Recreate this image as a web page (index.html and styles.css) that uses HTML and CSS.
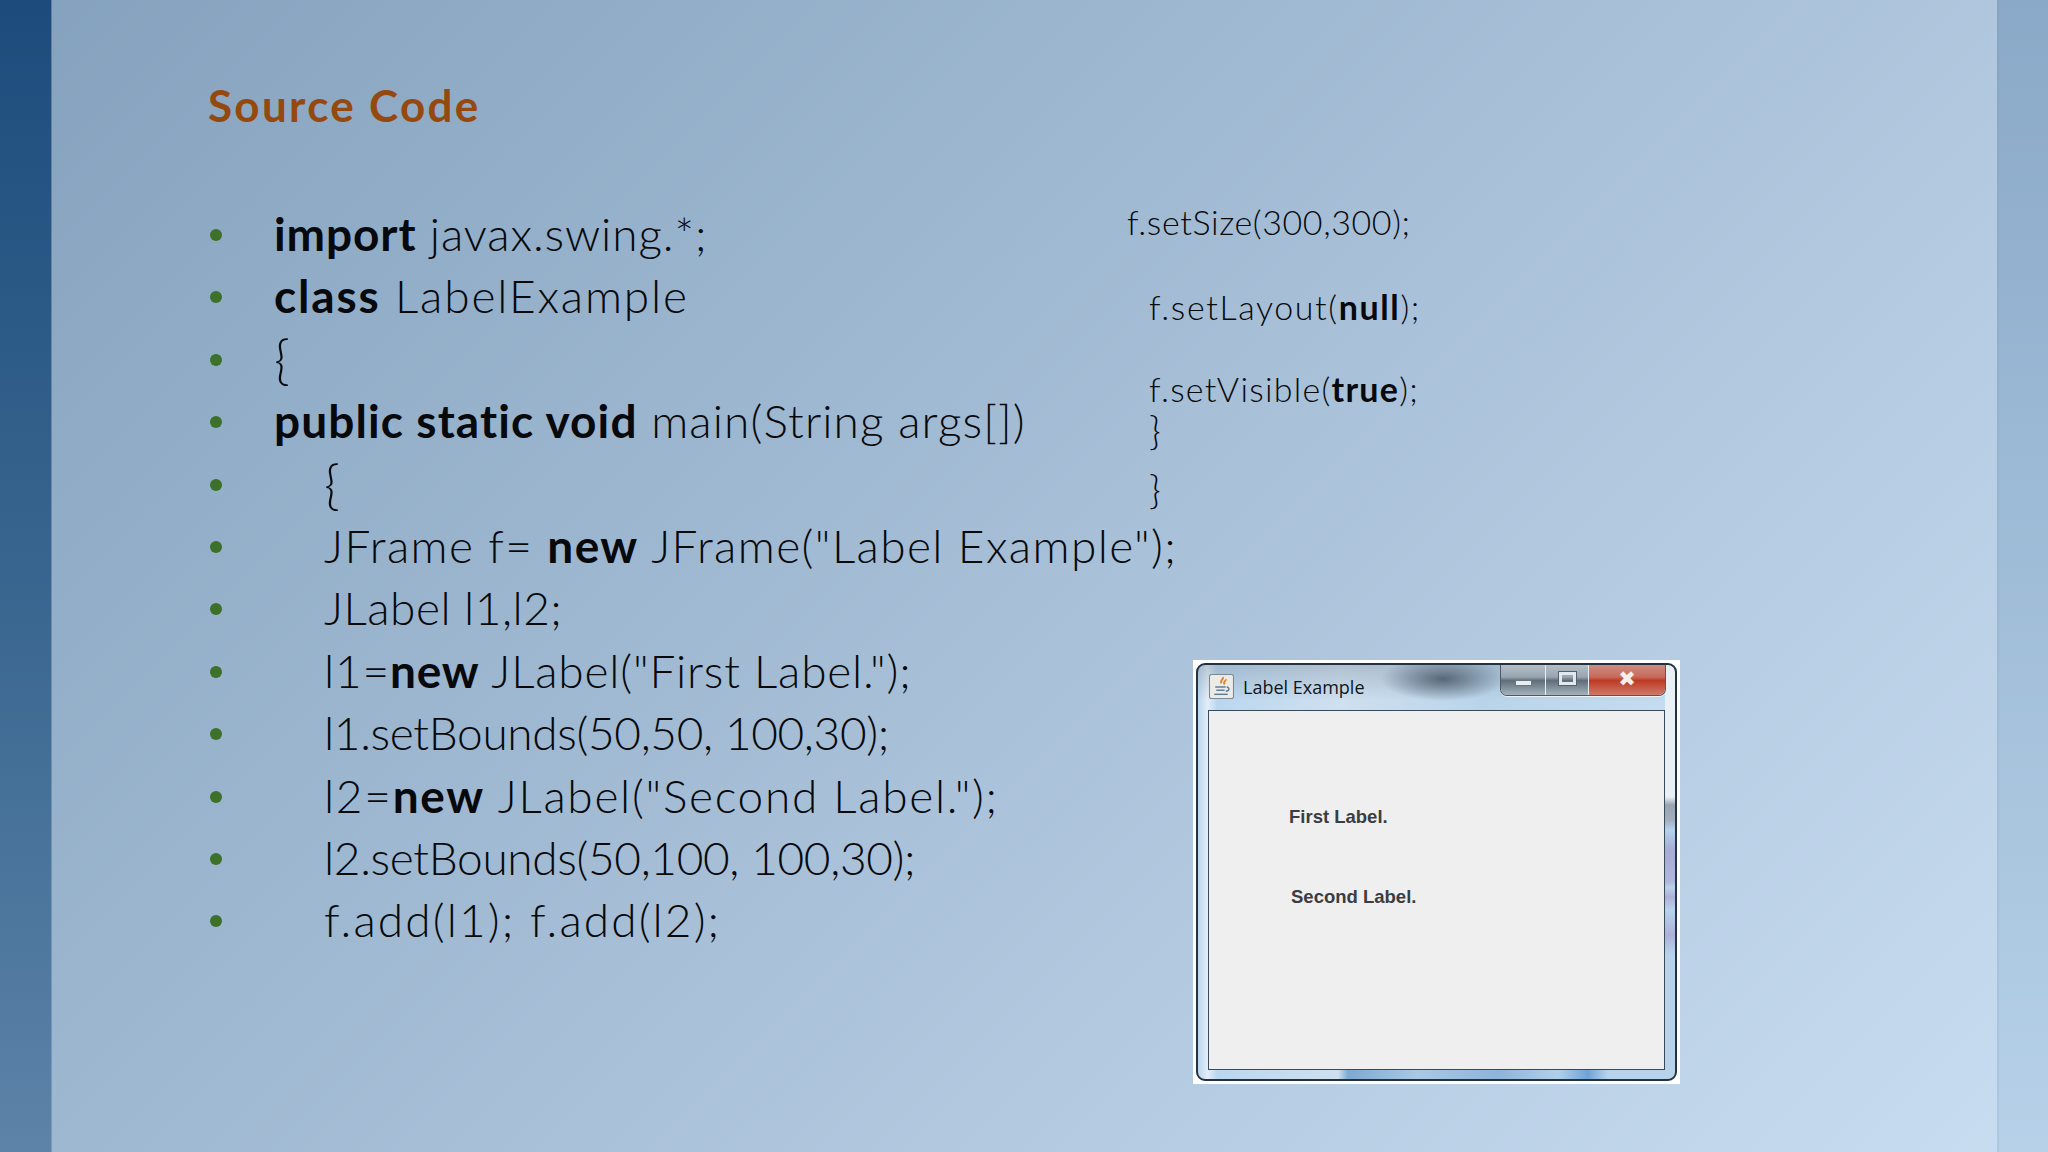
FILE: index.html
```html
<!DOCTYPE html>
<html lang="en">
<head>
<meta charset="utf-8">
<title>Source Code</title>
<link rel="stylesheet" href="styles.css">
</head>
<body>
<div class="slide">
  <div class="stripe-left"></div>
  <main class="content">
    <h1 class="title">Source Code</h1>
    <div class="columns">
      <ul class="code-list">
        <li class="track-09"><b>import</b> javax.swing.*;</li>
        <li class="track-18"><b>class</b> LabelExample</li>
        <li><span class="brace">{</span></li>
        <li class="track-11"><b>public static void</b> main(String args[])</li>
        <li class="indent"><span class="brace">{</span></li>
        <li class="indent track-14">JFrame f= <b>new</b> JFrame("Label Example");</li>
        <li class="indent track-05">JLabel l1,l2;</li>
        <li class="indent track-08">l1=<b>new</b> JLabel("First Label.");</li>
        <li class="indent track-neg">l1.setBounds(50,50, 100,30);</li>
        <li class="indent track-17">l2=<b>new</b> JLabel("Second Label.");</li>
        <li class="indent track-neg">l2.setBounds(50,100, 100,30);</li>
        <li class="indent track-20">f.add(l1); f.add(l2);</li>
      </ul>
      <div class="side">
        <div class="side-code">
          <p class="line-size">f.setSize(300,300);</p>
          <p class="line-layout">f.setLayout(<b>null</b>);</p>
          <p class="line-visible">f.setVisible(<b>true</b>);</p>
          <p class="line-brace1"><span class="side-brace">}</span></p>
          <p class="line-brace2"><span class="side-brace">}</span></p>
        </div>
        <div class="window">
          <div class="frame">
            <div class="titlebar">
              <svg class="java-icon" viewBox="0 0 24 24" aria-hidden="true">
                <rect x="0.5" y="0.5" width="23" height="23" rx="2" fill="#ecebe6" stroke="#7c8a96"/>
                <path d="M13 3c2 2-3 3-1 6M16 5c1 2-3 2-1 5" fill="none" stroke="#d9862a" stroke-width="1.8"/>
                <path d="M6 12.5h10M7 15.5h8M17 12.500c3 0 3 4-1 4" fill="none" stroke="#5d7f9c" stroke-width="1.4"/>
                <path d="M5 19.500h13" stroke="#5d7f9c" stroke-width="1.4"/>
              </svg>
              <span class="window-title">Label Example</span>
              <div class="buttons">
                <div class="btn btn-min"><span class="glyph-min"></span></div>
                <div class="btn btn-max"><span class="glyph-max"></span></div>
                <div class="btn btn-close"><span class="glyph-close">✖</span></div>
              </div>
            </div>
            <div class="panel">
              <div class="label label-first">First Label.</div>
              <div class="label label-second">Second Label.</div>
            </div>
          </div>
        </div>
      </div>
    </div>
  </main>
  <div class="stripe-right"></div>
</div>
</body>
</html>
```
FILE: styles.css
```css
* { box-sizing: border-box; }
html, body { margin: 0; padding: 0; }
body { width: 2048px; height: 1152px; overflow: hidden; font-family: "Lato", "Open Sans", sans-serif; }
.slide {
  width: 2048px; height: 1152px; display: flex;
  background: linear-gradient(135deg, #84a1bd 0%, #c9ddf1 100%);
  color: #07090d;
}
.stripe-left { width: 52px; background: linear-gradient(180deg, #1d4c7c 0%, #3b6891 55%, #5d83a8 100%); border-right: 1px solid rgba(150,180,210,.5); }
.stripe-right { width: 51px; background: linear-gradient(180deg, #8aa9c8 0%, #b6d1e8 100%); border-left: 2px solid rgba(100,130,160,.1); }
.content { flex: 1; padding: 77px 0 0 156px; }
.title { margin: 0; font-size: 44px; line-height: 56px; font-weight: 700; color: #96490f; letter-spacing: 2.3px; }
.columns { display: flex; margin-top: 70px; }
.code-list {
  width: 919px; flex: none; margin: 0; padding: 0; list-style: none; white-space: nowrap;
  font-size: 46px; font-weight: 300; line-height: 62.4px;
}
.code-list li { padding-left: 66px; position: relative; height: 62.4px; }
.code-list li::before { content: ""; position: absolute; left: 2px; top: 26px; width: 12px; height: 12px; border-radius: 50%; background: #3d7028; }
.code-list li.indent { padding-left: 116px; }
.code-list b, .side-code b { font-weight: 700; }
.brace { font-size: 54px; line-height: 0; vertical-align: -3px; }
.side-brace { font-size: 40px; line-height: 0; vertical-align: -1px; }
.track-neg { letter-spacing: -0.35px; }
.track-05 { letter-spacing: 0.5px; }
.track-08 { letter-spacing: 0.8px; }
.track-09 { letter-spacing: 0.9px; }
.track-11 { letter-spacing: 1.1px; }
.track-14 { letter-spacing: 1.4px; }
.track-17 { letter-spacing: 1.7px; }
.track-18 { letter-spacing: 1.85px; }
.track-20 { letter-spacing: 2.1px; }
.side { flex: none; width: 553px; }
.side-code { font-size: 34px; font-weight: 300; line-height: 42px; white-space: nowrap; margin-top: -2px; }
.side-code p { margin: 0 0 0 22px; height: 42px; }
.side-code .line-size { margin-left: 0; letter-spacing: 0.6px; }
.side-code .line-layout { margin-top: 43px; letter-spacing: 1.6px; }
.side-code .line-visible { margin-top: 40px; letter-spacing: 1.25px; }
.side-code .line-brace2 { margin-top: 17px; }
.window { margin: 149px 0 0 66px; width: 487px; height: 424px; padding: 3px; background: #fff; }
.frame {
  height: 100%; border: 2px solid #22323f; border-radius: 9px; padding: 0 10px 9px 10px;
  display: flex; flex-direction: column;
  background:
    linear-gradient(180deg, #e8f0f6 0, #e8f0f6 132px, #98a4b0 140px, #a2afbc 155px, #b5d2ec 165px, #a7abd6 185px, #b0b7dd 217px, #b7d3ec 222px, #adb1da 232px, #b7d3ec 245px, #adb1da 270px, #b7d3ec 290px) right top / 10px 100% no-repeat,
    linear-gradient(90deg, transparent 140px, #7fa9d2 150px, #a9c8e4 220px, #8fb4da 300px, #b1cfe9 360px, #6fa3d8 390px, #b7d3ec 410px) left bottom / 100% 9px no-repeat,
    radial-gradient(ellipse 62px 22px at 245px 14px, rgba(65,80,96,.8), rgba(65,80,96,0)),
    linear-gradient(180deg, rgba(110,125,140,.32) 0, rgba(110,125,140,0) 36px),
    linear-gradient(90deg, #b9d5ee 0%, #e3eef8 2%, #bad7f0 4%, #cfe0ef 30%, #b9d4ea 60%, #c6dcf0 100%);
}
.titlebar { height: 45px; flex: none; display: flex; align-items: center; padding-left: 1px; position: relative; }
.java-icon { width: 25px; height: 25px; margin-top: -2px; margin-right: 9px; flex: none; }
.window-title { font-family: "Open Sans", sans-serif; font-size: 18px; color: #10151b; margin-top: -2px; }
.buttons { position: absolute; top: 0; right: -1px; display: flex; height: 31px; border: 1px solid #4a5a68; border-top: 0; border-radius: 0 0 7px 7px; overflow: hidden; box-shadow: 0 1px 0 rgba(255,255,255,.7); }
.btn { display: flex; align-items: center; justify-content: center; height: 100%; border-right: 1px solid #e8eef4; background: linear-gradient(180deg, #b3bec8 0%, #98a5b0 40%, #5f6d79 52%, #a5b3bf 100%); }
.btn-min { width: 45px; }
.btn-max { width: 43px; }
.btn-close { width: 76px; border-right: 0; background: linear-gradient(180deg, #cf8d80 0%, #c66a5a 40%, #bd3a24 52%, #cf7a6a 100%); }
.glyph-min { width: 17px; height: 6px; margin-top: 6px; background: #e8edf2; border: 1px solid #6a7782; }
.glyph-max { width: 17px; height: 13px; border: 3px solid #e2e8ee; outline: 1px solid #55626e; margin-top: -4px; }
.glyph-close { color: #f3efec; font-family: "DejaVu Sans", sans-serif; font-size: 21px; line-height: 1; margin-top: -1px; }
.panel { flex: 1; background: #efefef; border: 1px solid #3a4a58; padding: 95px 0 0 80px; }
.label { font-family: "Liberation Sans", sans-serif; font-weight: 700; font-size: 18.5px; line-height: 22px; color: #3a3d41; }
.label-second { margin: 58px 0 0 2px; }
```
